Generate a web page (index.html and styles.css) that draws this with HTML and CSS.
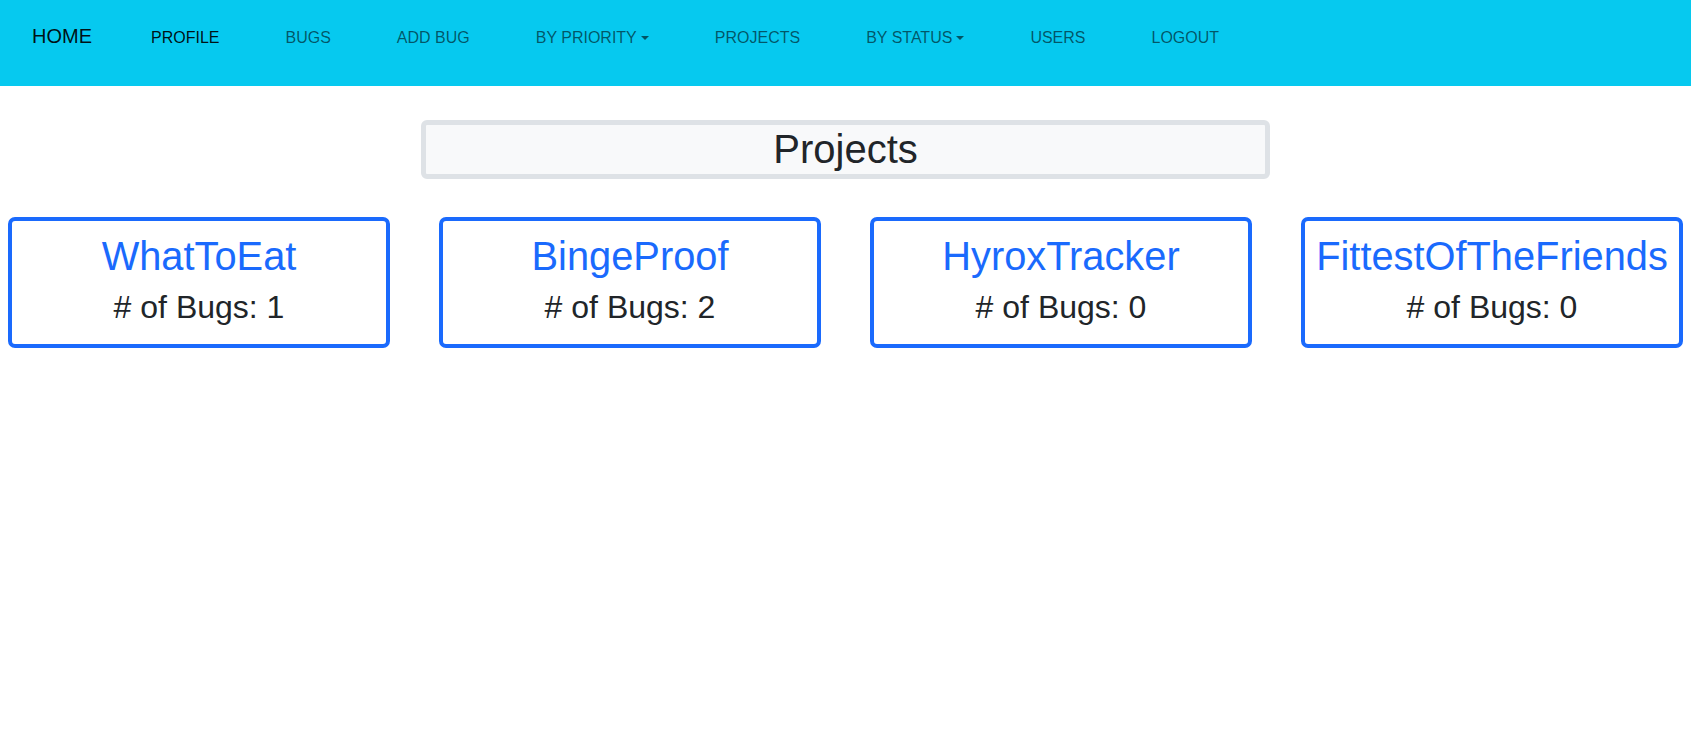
FILE: index.html
```html
<!DOCTYPE html>
<html lang="en">
<head>
<meta charset="utf-8">
<title>Projects</title>
<link rel="stylesheet" href="styles.css">
</head>
<body>
<nav class="navbar">
  <a class="brand" href="#">HOME</a>
  <ul class="nav-links">
    <li><a class="nav-link active" href="#">PROFILE</a></li>
    <li><a class="nav-link" href="#">BUGS</a></li>
    <li><a class="nav-link" href="#">ADD BUG</a></li>
    <li><a class="nav-link dropdown" href="#">BY PRIORITY</a></li>
    <li><a class="nav-link" href="#">PROJECTS</a></li>
    <li><a class="nav-link dropdown" href="#">BY STATUS</a></li>
    <li><a class="nav-link" href="#">USERS</a></li>
    <li><a class="nav-link" href="#">LOGOUT</a></li>
  </ul>
</nav>
<main class="content">
  <h1 class="page-title">Projects</h1>
  <div class="project-grid">
    <div class="project-card">
      <a class="project-name" href="#">WhatToEat</a>
      <p class="bug-count"># of Bugs: 1</p>
    </div>
    <div class="project-card">
      <a class="project-name" href="#">BingeProof</a>
      <p class="bug-count"># of Bugs: 2</p>
    </div>
    <div class="project-card">
      <a class="project-name" href="#">HyroxTracker</a>
      <p class="bug-count"># of Bugs: 0</p>
    </div>
    <div class="project-card">
      <a class="project-name" href="#">FittestOfTheFriends</a>
      <p class="bug-count"># of Bugs: 0</p>
    </div>
  </div>
</main>
</body>
</html>
```

FILE: styles.css
```css
* {
  box-sizing: border-box;
}

body {
  margin: 0;
  font-family: "Liberation Sans", Arial, sans-serif;
  color: #212529;
  background: #ffffff;
}

a {
  text-decoration: none;
}

.navbar {
  display: flex;
  align-items: baseline;
  height: 86px;
  padding: 21px 0 0 32px;
  background: #06c9ef;
}

.brand {
  font-size: 20px;
  line-height: 1.5;
  color: rgba(0, 0, 0, 0.92);
}

.nav-links {
  display: flex;
  align-items: baseline;
  gap: 66px;
  margin: 0 0 0 59px;
  padding: 0;
  list-style: none;
}

.nav-link {
  font-size: 16px;
  line-height: 1.5;
  color: rgba(0, 0, 0, 0.58);
}

.nav-link.active {
  color: rgba(0, 0, 0, 0.92);
}

.nav-link.dropdown::after {
  content: "";
  display: inline-block;
  margin-left: 4px;
  vertical-align: 3px;
  border-top: 4.8px solid currentColor;
  border-left: 4.8px solid transparent;
  border-right: 4.8px solid transparent;
}

.content {
  padding: 34px 8px 0;
}

.page-title {
  width: 849px;
  margin: 0 auto;
  border: 5px solid #dee2e6;
  border-radius: 6px;
  background: #f8f9fa;
  font-size: 40px;
  font-weight: 400;
  line-height: 1.225;
  text-align: center;
  color: #212529;
}

.project-grid {
  display: grid;
  grid-template-columns: repeat(4, 1fr);
  column-gap: 49px;
  margin-top: 38px;
}

.project-card {
  display: flex;
  flex-direction: column;
  align-items: center;
  padding: 11.5px 0 17.3px;
  border: 4px solid #1a6afd;
  border-radius: 7px;
  text-align: center;
}

.project-name {
  font-size: 39.8px;
  line-height: 1.2;
  color: #1a6afd;
}

.bug-count {
  margin: 8px 0 0;
  font-size: 32px;
  line-height: 1.2;
  color: #212529;
}
```
